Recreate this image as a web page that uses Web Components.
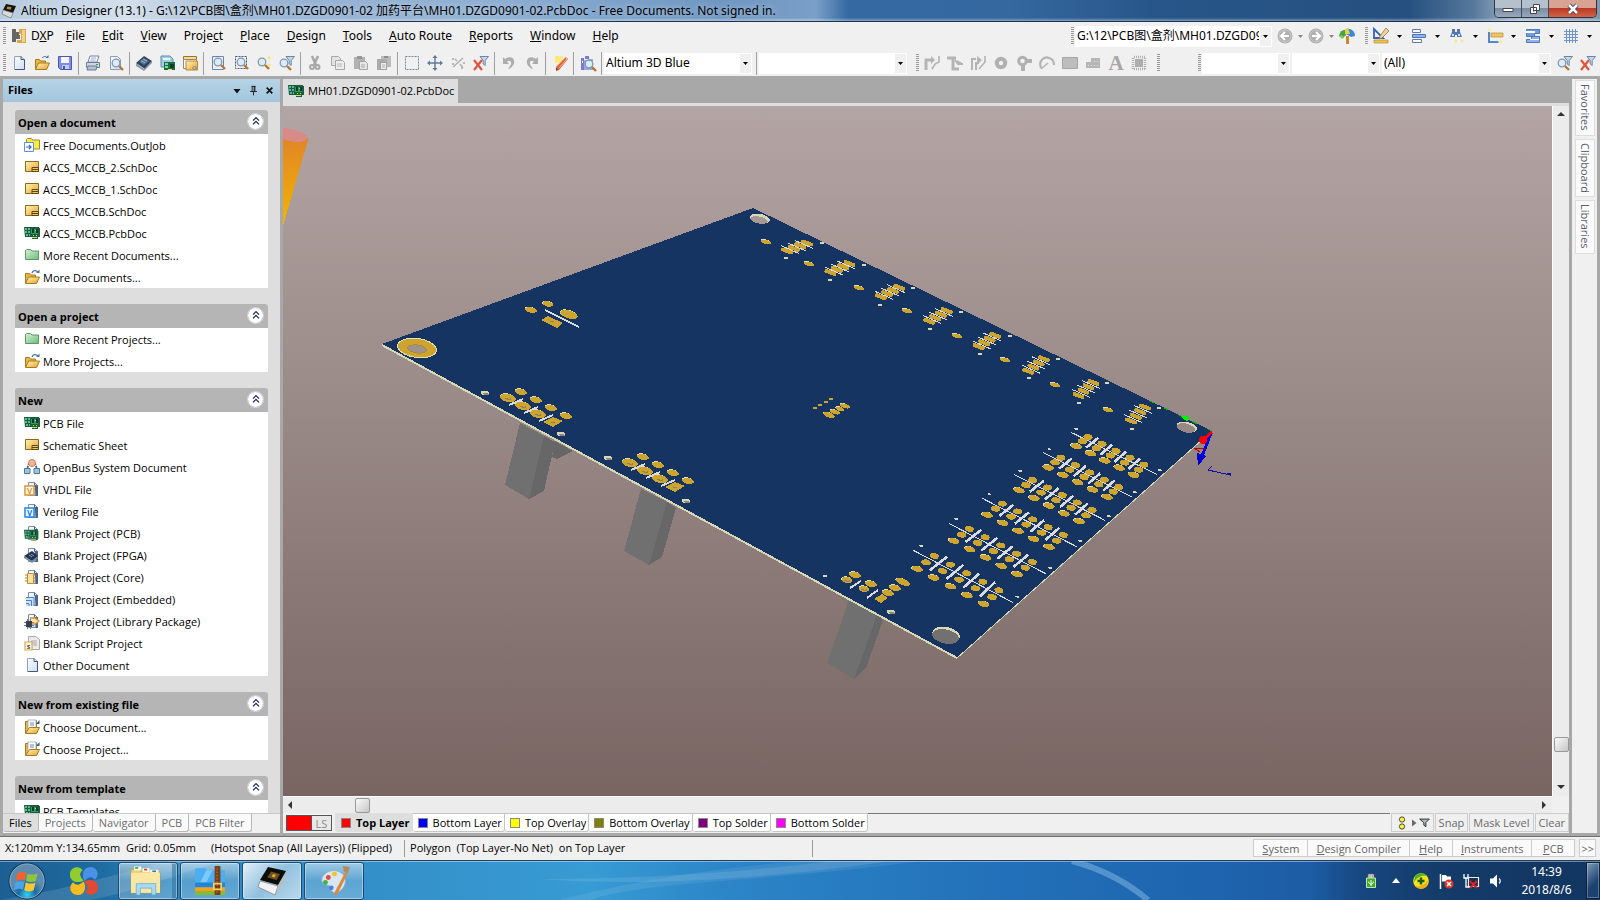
<!DOCTYPE html>
<html lang="en">
<head>
<meta charset="utf-8">
<title>Altium Designer</title>
<style>
html, body {
  margin: 0;
  height: 100%;
}
body {
  display: flex;
  flex-direction: column;
  overflow: hidden;
  background: #a8a8a8;
  color: #000;
  font: 11px/16px "Open Sans", "Noto Sans CJK SC", sans-serif;
}
main {
  flex: 1;
  min-height: 0;
  display: flex;
  gap: 3px;
  padding: 3px;
}
ad-row {
  font: 12px/16px "Noto Sans", "Noto Sans CJK SC", sans-serif;
}
</style>
</head>
<body>
<ad-titlebar>Altium Designer (13.1) - G:\12\PCB图\盒剂\MH01.DZGD0901-02 加药平台\MH01.DZGD0901-02.PcbDoc - Free Documents. Not signed in.</ad-titlebar>

<ad-row>
  <ad-grip></ad-grip>
  <ad-menu icon="dxp">D<u>X</u>P</ad-menu>
  <ad-menu><u>F</u>ile</ad-menu>
  <ad-menu><u>E</u>dit</ad-menu>
  <ad-menu><u>V</u>iew</ad-menu>
  <ad-menu>Proje<u>c</u>t</ad-menu>
  <ad-menu><u>P</u>lace</ad-menu>
  <ad-menu><u>D</u>esign</ad-menu>
  <ad-menu><u>T</u>ools</ad-menu>
  <ad-menu><u>A</u>uto Route</ad-menu>
  <ad-menu><u>R</u>eports</ad-menu>
  <ad-menu><u>W</u>indow</ad-menu>
  <ad-menu><u>H</u>elp</ad-menu>
  <ad-space></ad-space>
  <ad-grip></ad-grip>
  <ad-address value="G:\12\PCB图\盒剂\MH01.DZGD0901-02 加药平台"></ad-address>
  <ad-tool icon="back" more="off" label="Back"></ad-tool>
  <ad-tool icon="forward" more="off" label="Forward"></ad-tool>
  <ad-tool icon="home" label="Home"></ad-tool>
  <ad-space fixed></ad-space>
  <ad-grip></ad-grip>
  <ad-tool icon="draft" more="on" label="Utilities"></ad-tool>
  <ad-tool icon="align" more="on" label="Align"></ad-tool>
  <ad-tool icon="find" more="on" label="Find"></ad-tool>
  <ad-tool icon="dimension" more="on" label="Dimensions"></ad-tool>
  <ad-tool icon="rooms" more="on" label="Rooms"></ad-tool>
  <ad-tool icon="grid" more="on" label="Grids"></ad-tool>
</ad-row>

<ad-row>
  <ad-grip></ad-grip>
  <ad-tool icon="page" label="New"></ad-tool>
  <ad-tool icon="open" label="Open"></ad-tool>
  <ad-tool icon="save" label="Save"></ad-tool>
  <ad-sep></ad-sep>
  <ad-tool icon="print" label="Print"></ad-tool>
  <ad-tool icon="preview" label="Preview"></ad-tool>
  <ad-sep></ad-sep>
  <ad-tool icon="chip" label="Devices"></ad-tool>
  <ad-tool icon="release" label="Release"></ad-tool>
  <ad-tool icon="stack" label="Workspace"></ad-tool>
  <ad-sep></ad-sep>
  <ad-tool icon="zoomdoc" label="Fit document"></ad-tool>
  <ad-tool icon="zoomarea" label="Zoom area"></ad-tool>
  <ad-tool icon="zoomsel" label="Zoom selected"></ad-tool>
  <ad-tool icon="zoomfilter" label="Zoom filtered"></ad-tool>
  <ad-sep></ad-sep>
  <ad-tool icon="cut" label="Cut"></ad-tool>
  <ad-tool icon="copy" label="Copy"></ad-tool>
  <ad-tool icon="paste" label="Paste"></ad-tool>
  <ad-tool icon="stamp" label="Rubber stamp"></ad-tool>
  <ad-sep></ad-sep>
  <ad-tool icon="select" label="Select area"></ad-tool>
  <ad-tool icon="move" label="Move"></ad-tool>
  <ad-tool icon="deselect" label="Deselect"></ad-tool>
  <ad-tool icon="clearfilter" label="Clear filter"></ad-tool>
  <ad-sep></ad-sep>
  <ad-tool icon="undo" label="Undo"></ad-tool>
  <ad-tool icon="redo" label="Redo"></ad-tool>
  <ad-sep></ad-sep>
  <ad-tool icon="wand" label="Cross probe"></ad-tool>
  <ad-sep></ad-sep>
  <ad-tool icon="browse" label="Browse"></ad-tool>
  <ad-sep></ad-sep>
  <ad-combo label="View configuration" size="148" value="Altium 3D Blue"></ad-combo>
  <ad-sep></ad-sep>
  <ad-combo label="Variant" size="148" value=""></ad-combo>
  <ad-space fixed></ad-space>
  <ad-grip></ad-grip>
  <ad-tool icon="route" label="Route"></ad-tool>
  <ad-tool icon="multiroute" label="Multi route"></ad-tool>
  <ad-tool icon="diffroute" label="Differential route"></ad-tool>
  <ad-tool icon="pad" label="Pad"></ad-tool>
  <ad-tool icon="via" label="Via"></ad-tool>
  <ad-tool icon="arc" label="Arc"></ad-tool>
  <ad-tool icon="fill" label="Fill"></ad-tool>
  <ad-tool icon="polygon" label="Polygon"></ad-tool>
  <ad-tool icon="text" label="String"></ad-tool>
  <ad-tool icon="component" label="Component"></ad-tool>
  <ad-space fixed></ad-space>
  <ad-grip></ad-grip>
  <ad-space></ad-space>
  <ad-grip></ad-grip>
  <ad-combo label="Net" size="88" value=""></ad-combo>
  <ad-combo label="Component" size="88" value=""></ad-combo>
  <ad-combo label="Filter" size="169" value="(All)"></ad-combo>
  <ad-tool icon="zoomfilter" label="Apply filter"></ad-tool>
  <ad-tool icon="clearfilter" label="Clear filter"></ad-tool>
</ad-row>

<main>
  <ad-panel heading="Files">
    <ad-section heading="Open a document">
      <ad-item icon="outjob">Free Documents.OutJob</ad-item>
      <ad-item icon="sch">ACCS_MCCB_2.SchDoc</ad-item>
      <ad-item icon="sch">ACCS_MCCB_1.SchDoc</ad-item>
      <ad-item icon="sch">ACCS_MCCB.SchDoc</ad-item>
      <ad-item icon="pcb">ACCS_MCCB.PcbDoc</ad-item>
      <ad-item icon="recent">More Recent Documents...</ad-item>
      <ad-item icon="folder">More Documents...</ad-item>
    </ad-section>
    <ad-section heading="Open a project">
      <ad-item icon="recent">More Recent Projects...</ad-item>
      <ad-item icon="folder">More Projects...</ad-item>
    </ad-section>
    <ad-section heading="New">
      <ad-item icon="pcb">PCB File</ad-item>
      <ad-item icon="sch">Schematic Sheet</ad-item>
      <ad-item icon="openbus">OpenBus System Document</ad-item>
      <ad-item icon="vhdl">VHDL File</ad-item>
      <ad-item icon="verilog">Verilog File</ad-item>
      <ad-item icon="prjpcb">Blank Project (PCB)</ad-item>
      <ad-item icon="prjfpga">Blank Project (FPGA)</ad-item>
      <ad-item icon="prjcore">Blank Project (Core)</ad-item>
      <ad-item icon="prjemb">Blank Project (Embedded)</ad-item>
      <ad-item icon="prjlib">Blank Project (Library Package)</ad-item>
      <ad-item icon="script">Blank Script Project</ad-item>
      <ad-item icon="page">Other Document</ad-item>
    </ad-section>
    <ad-section heading="New from existing file">
      <ad-item icon="choose">Choose Document...</ad-item>
      <ad-item icon="choose">Choose Project...</ad-item>
    </ad-section>
    <ad-section heading="New from template">
      <ad-item icon="pcb">PCB Templates...</ad-item>
    </ad-section>
    <ad-tab slot="tabs" current>Files</ad-tab>
    <ad-tab slot="tabs">Projects</ad-tab>
    <ad-tab slot="tabs">Navigator</ad-tab>
    <ad-tab slot="tabs">PCB</ad-tab>
    <ad-tab slot="tabs">PCB Filter</ad-tab>
  </ad-panel>

  <ad-document name="MH01.DZGD0901-02.PcbDoc">
    <ad-scene></ad-scene>
    <ad-layer slot="layers" color="#f00" current>Top Layer</ad-layer>
    <ad-layer slot="layers" color="#00f">Bottom Layer</ad-layer>
    <ad-layer slot="layers" color="#ff0">Top Overlay</ad-layer>
    <ad-layer slot="layers" color="#808000">Bottom Overlay</ad-layer>
    <ad-layer slot="layers" color="#800080">Top Solder</ad-layer>
    <ad-layer slot="layers" color="#f0f">Bottom Solder</ad-layer>
  </ad-document>

  <ad-dock>
    <button>Favorites</button>
    <button>Clipboard</button>
    <button>Libraries</button>
  </ad-dock>
</main>

<ad-status></ad-status>
<ad-taskbar></ad-taskbar>

<script>
// all glyphs live on a 16 x 16 grid
const lens = (x, y) => `
  <path d="M${x + 3} ${y + 3}l4 4" stroke="#b5763a" stroke-width="2.4"/>
  <circle cx="${x}" cy="${y}" r="3.8" fill="#dcecf8" stroke="#8497ad" stroke-width="1.3"/>`
const sheet = '<path d="M4.500 1.500h6l3 3v10h-9z" fill="url(#paper)" stroke="#7a8dad"/><path d="M10.500 1.500v3h3v10h-2" fill="#4a6288" stroke="#4a6288"/>'
const board = `
  <path d="M0 2h15v1h1v9h-2v2H8v-2H1z" fill="#1c5c40"/>
  <path d="M1 3h2v2H1zM4 3h2v2H4zM1 6h2v2H1zM4 6h2v2H4zM2 9h2v2H2zM5 9h1v2H5z" fill="#58b98a"/>
  <path d="M7 4h7v5H7z" fill="#2f9a5c"/><path d="M8 4h2v4H8zM12 4h2v4h-2z" fill="#12392c"/><path d="M11 5h1v1h-1zM9 10h1v1H9zM12 10h1v1h-1z" fill="#9dee8e"/>
  <path d="M8 12h5v1H8z" fill="#dbe03c"/>`
const funnel = '<path d="M7 1.500h8.500l-3.300 4v5l-2-1.500v-3.500z" fill="#c4d6ee" stroke="#6c86a8"/>'
const folderOpen = '<path d="M1.500 14V4.500h4l1 1.500h5v2" fill="#e9b44a" stroke="#a87a1c"/><path d="M1.500 14.500l3-6.500h11l-3 6.500z" fill="url(#gold)" stroke="#a87a1c"/>'
const disc = d => `<circle cx="8" cy="8" r="7.500" fill="#b0b0b0"/><circle cx="8" cy="8" r="6" fill="none" stroke="#c8c8c8"/><path d="${d}" stroke="#fff" stroke-width="2" fill="none"/>`

const icons = {
  app: '<path d="M5 1l10 2-3 7-10-3z" fill="#151515"/><path d="M2 7l10 3-2 5-9-4z" fill="#dcdcdc" stroke="#666" stroke-width=".6"/><path d="M6.500 3.500l4 .8-1 2.500-4-1z" fill="#b78d34"/>',
  dxp: '<path d="M1 1h4v3h3v3h1v4H5v3H1z" fill="#666"/><path d="M8 1h7v14H6v-3h4V6H8z" fill="#d9a945"/><path d="M11 2h3v12h-3z" fill="#f0d28c"/>',
  page: '<path d="M3.500 1.500h6.500l3.500 3v10h-10z" fill="url(#paper)" stroke="#8fa2c0"/><path d="M10 1.500v3h3.500v10H4" fill="none" stroke="#41587c"/>',
  open: folderOpen + '<path d="M8 3c2-2 4-2 5 0" fill="none" stroke="#3d68a8"/><path d="M11.500 3h3v-3z" fill="#3d68a8"/>',
  save: '<path d="M1.500 1.500h13v13h-11l-2-2z" fill="#7f8ee0" stroke="#4c58b0"/><path d="M4 2h8v6H4z" fill="#f2f5ff"/><path d="M5 10h7v4H5z" fill="#c3cbef"/><path d="M6 11h2v3H6z" fill="#4c58b0"/>',
  print: '<path d="M5 1h9l-2 6H3z" fill="#fff" stroke="#7486a6"/><path d="M6 3h5M5.500 5h5" stroke="#9aaac4"/><path d="M1.500 7.500h13v5h-13z" fill="#cfd6e2" stroke="#6d7d98"/><path d="M3 11h9l-1 4H2z" fill="#b6c1d3" stroke="#6d7d98"/><path d="M11 9h2v1h-2z" fill="#3a3"/>',
  preview: '<path d="M2.500 1.500h7l3 3v10h-10z" fill="url(#paper)" stroke="#8a9cb8"/>' + lens(8, 8),
  chip: '<path d="M8 1l8 5-7 8-9-6z" fill="#31435c"/><path d="M8 3l5 3-5 4-5-3z" fill="#54708f"/><path d="M7 4l4 2M5 5.500l4 2.500" stroke="#a6bdd2"/><path d="M0 8v3l8 5 8-8V6l-8 8z" fill="#8a99ac"/>',
  release: '<path d="M2 1h9l3 3v8H2z" fill="#a9cbe2" stroke="#5c8cae"/><path d="M4 3h7v2H4z" fill="#e6f4fb"/><path d="M5 7h11v8H5z" fill="#1d6b47"/><path d="M6 8h3v2H6zM6 11h3v2H6z" fill="#6fe0a5"/><path d="M11 9h4v4h-4z" fill="#0d3c2c"/><path d="M9 14h4v1H9z" fill="#dbe03c"/>',
  stack: '<path d="M1.500 1.500h13v3h-13z" fill="#f7d98b" stroke="#9a7428"/><path d="M1.500 4.500h13v9h-13z" fill="#fff" stroke="#8b8b8b"/><path d="M4 6h11.500v9H4z" fill="url(#gold)" stroke="#b8892f"/><path d="M11 12h3v2h-3z" fill="#fff" stroke="#7d7d7d"/>',
  zoomdoc: '<path d="M2.500 1.500h11v13h-11z" fill="#e9f0fa" stroke="#6f87ae"/>' + lens(8, 7),
  zoomarea: '<path d="M2.500 1.500h11v12h-11z" fill="none" stroke="#47597a" stroke-dasharray="2 1"/>' + lens(8, 7),
  zoomsel: lens(6, 7) + '<path d="M13 1l2 2-2 2-2-2zM13 8l2 2-2 2-2-2z" fill="#f4ea78"/>',
  zoomfilter: funnel + lens(5, 8),
  cut: '<path d="M5 1l4 9M11 1l-4 9" stroke="#a8a8a8" stroke-width="2.600"/><circle cx="5" cy="12" r="2" fill="none" stroke="#a8a8a8" stroke-width="2"/><circle cx="10.500" cy="12" r="2" fill="none" stroke="#a8a8a8" stroke-width="2"/>',
  copy: '<path d="M1.500 1.500h7l2 2v7h-9z" fill="#e4e4e4" stroke="#a8a8a8"/><path d="M5.500 5.500h7l2 2v7h-9z" fill="#ededed" stroke="#a8a8a8"/><path d="M7 9h5M7 11h5" stroke="#b5b5b5"/>',
  paste: '<path d="M1 2h11v12H1z" fill="#b2b2b2"/><path d="M4 1h5v3H4z" fill="#979797"/><path d="M6.500 6.500h6l2 2v6h-8z" fill="#e6e6e6" stroke="#a5a5a5"/><path d="M8 10h4M8 12h4" stroke="#a9a9a9"/>',
  stamp: '<path d="M5 1h10v11H5z" fill="#bcbcbc"/><path d="M1 4h10v11H1z" fill="#aaa"/><path d="M8 1h4v2H8z" fill="#8f8f8f"/><path d="M4.500 7.500h6v7h-6z" fill="#eee" stroke="#a0a0a0"/><path d="M6 10h3M6 12h3" stroke="#aaa"/>',
  select: '<path d="M1.500 1.500h13v13h-13z" fill="none" stroke="#7b8798" stroke-dasharray="2 1"/>',
  move: '<path d="M8 2v12M2 8h12" stroke="#62789a" stroke-width="1.400"/><path d="M8 0l2.500 3h-5zM8 16l2.500-3h-5zM0 8l3-2.500v5zM16 8l-3-2.500v5z" fill="#62789a"/>',
  deselect: '<path d="M3 12L13 3M5 4l2 2M10 9l3 4" stroke="#b0b0b0" stroke-width="1.500"/><path d="M2 3h2v2H2zM2 8h2v2H2zM11 12h2v2h-2zM13 7h2v2h-2z" fill="#bbb"/>',
  clearfilter: funnel + '<path d="M1 5l8 10M9 5L1 15" stroke="#e0543c" stroke-width="2.200"/>',
  undo: '<path d="M2 2v7h6L6 6.500c3-2 4.500 0 4 2.500-.5 2-2 3-3 5.500 4-2 7-5 6-9-1-4-5-4-9-1.500z" fill="#adadad"/>',
  redo: '<path d="M14 2v7H8l2-2.500C7 4.500 5.500 6.500 6 9c.5 2 2 3 3 5.500-4-2-7-5-6-9 1-4 5-4 9-1.500z" fill="#adadad"/>',
  wand: '<path d="M3 1h8v2H9v2h2v3H3z" fill="#fbe978"/><path d="M14 2l2 2-9 11-3 1v-4z" fill="#e2603c"/><path d="M14 3l1 1-8 9" fill="none" stroke="#f7b49a"/><path d="M4 16v-3l2 1z" fill="#553"/>',
  browse: '<path d="M1 3h3v12H1z" fill="#7a7cd0"/><path d="M4 5h4v10H4z" fill="#9aa8e6"/><path d="M5 1h4v3H5z" fill="#7a7cd0"/><path d="M8 4h5v11H8z" fill="#8fb0dc"/><path d="M2 6h1v2H2zM5 8h2v3H5z" fill="#fff"/>' + lens(9, 9),
  back: disc('M12 8H5M8 4L4 8l4 4'),
  forward: disc('M4 8h7M8 4l4 4-4 4'),
  home: '<path d="M7 8h3v8H7z" fill="#c78a2e"/><path d="M0 8c1-5 4-7 8-6l-1 5-3 3z" fill="#49a33c"/><path d="M7 1c5-1 9 2 9 7l-4 1-5-3z" fill="#3f86d8"/><path d="M6 1l3-1 2 6H6z" fill="#e8d24a"/><path d="M0 8l3-1 2 2-2 2z" fill="#7dcb57"/>',
  draft: '<path d="M1 1v9h9z" fill="none" stroke="#2f64c0" stroke-width="1.800"/><path d="M1 12h14v3H1z" fill="#f2c24e" stroke="#a97c22" stroke-width=".6"/><path d="M13 0l3 3-7 7-3 1 1-3z" fill="#f0cf9a" stroke="#8d6a36" stroke-width=".7"/>',
  align: '<path d="M1.500 1.500h8v3h-8z" fill="#fff" stroke="#5f7cb0"/><path d="M1.500 6.500h13v3h-13z" fill="#8fb5ef" stroke="#4f73b4"/><path d="M1.500 11.500h9v3h-9z" fill="#fff" stroke="#5f7cb0"/>',
  find: '<path d="M3 1h3v3h2V1h3v3l2 5H8V7H6v2H1l2-5z" fill="#5377b6"/><path d="M3 6h2v2H3zM9 6h2v2H9z" fill="#cfe0f7"/><path d="M7 11l1.500 2L7 15l-2-2zM13 11l2 2-2 2-1.500-2z" fill="#f2ea8c"/>',
  dimension: '<path d="M2 4v10h10" fill="none" stroke="#5585cf" stroke-width="2"/><path d="M4 5h12v4H4z" fill="#f1c659" stroke="#a77f2c" stroke-width=".6"/><path d="M2 0l2 2-2 2-2-2zM13 11l2.500 3-2.500 2-2-2z" fill="#f7ef9b"/>',
  rooms: '<path d="M1.500 1.500h13v4h-5v3h-8z" fill="#6f9be0" stroke="#4f78bc"/><path d="M1 3h9v2H1z" fill="#fff"/><path d="M1.500 11.500h5v-3h8v6h-13z" fill="#8fb3ea" stroke="#4f78bc"/><path d="M5 11h9v1H5z" fill="#fff"/>',
  grid: '<path d="M3.500 1v14M6.500 1v14M9.500 1v14M12.500 1v14M1 3.500h14M1 6.500h14M1 9.500h14M1 12.500h14" stroke="#6f93cc"/>',
  route: '<path d="M2 15V5h5" stroke="#b4b4b4" stroke-width="3" fill="none"/><path d="M7 1l4 4-4 4z" fill="#b4b4b4"/><path d="M15 1v6l-4 2-3 5" stroke="#b4b4b4" stroke-width="1.600" fill="none"/>',
  multiroute: '<path d="M0 3h9M6 3v11h6" stroke="#b4b4b4" stroke-width="3" fill="none"/><path d="M8 5l3 4h5M10 6l5 3" stroke="#b4b4b4" stroke-width="2" fill="none"/>',
  diffroute: '<path d="M2 15V4h4M6 15V8h3" stroke="#b4b4b4" stroke-width="2" fill="none"/><path d="M7 1l5 4-5 5z" fill="#b4b4b4"/><path d="M15 1v6l-6 7" stroke="#b4b4b4" stroke-width="1.600" fill="none"/>',
  pad: '<circle cx="8" cy="8" r="4.200" fill="none" stroke="#b0b0b0" stroke-width="4"/>',
  via: '<circle cx="6.500" cy="6" r="3.800" fill="none" stroke="#b0b0b0" stroke-width="3"/><path d="M5 10h4v6H5zM11 4h5v4h-5z" fill="#b0b0b0"/>',
  arc: '<path d="M2 13C-1 5 6 1 10 3c4 1 5 4 5 7" fill="none" stroke="#b4b4b4" stroke-width="2.200"/><path d="M2 14l7-6" stroke="#b4b4b4" stroke-width="1.600"/>',
  fill: '<path d="M.500 2.500h15v11H.500z" fill="#bdbdbd" stroke="#a6a6a6"/>',
  polygon: '<path d="M1 7h5V3h9v10H1z" fill="#b6b6b6"/><path d="M3 10h1v1H3zM6 10h1v1H6zM9 10h1v1H9zM12 10h1v1h-1zM9 6h1v1H9zM12 6h1v1h-1z" fill="#e2e2e2"/>',
  text: '<text x="8" y="15" text-anchor="middle" font-family="Liberation Serif" font-weight="bold" font-size="21" fill="#a6a6a6">A</text>',
  component: '<path d="M4 4h8v8H4z" fill="#aeaeae"/><path d="M3 2h11M3 14h11M2 3v11M14 3v11" stroke="#b0b0b0" stroke-width="2.500" stroke-dasharray="1 1"/>',
  outjob: '<path d="M2.500 12V2.500l1-1h4l1 1.500h7v9h-6" fill="#f6ea4e" stroke="#98912a"/><path d="M.500 5.500h9v9h-9z" fill="#fff" stroke="#5b8fe0"/><path d="M2 10h5M5 8l2 2-2 2" fill="none" stroke="#2f66c8" stroke-width="1.200"/>',
  sch: '<path d="M1.500 2.500h13v10h-13z" fill="url(#gold)" stroke="#8b6b1b"/><path d="M8 8.500h6.500v4H8z" fill="#f4c65a" stroke="#5d4610"/><path d="M8 10.500h6" stroke="#5d4610"/>',
  pcb: board,
  recent: '<path d="M1.500 12.500v-9l1-1h4l1.500 1.500h6.500v8.500z" fill="url(#leaf)" stroke="#5d9668"/>',
  folder: folderOpen + '<path d="M8 4c1-3 4-3 6-1" fill="none" stroke="#4d74a8" stroke-width="1.300"/><path d="M12 4h3.500V.500z" fill="#4d74a8"/>',
  openbus: '<path d="M5 4l-2 6M11 4l2 6" stroke="#3f5575" stroke-width="1.800" stroke-dasharray="2 1"/><circle cx="8" cy="4" r="3.500" fill="#f6b795" stroke="#c47f58"/><path d="M.500 9.500h5.500v5H.500zM10 9.500h5.500v5H10z" fill="#9cc4e0" stroke="#4b7899"/>',
  vhdl: sheet + '<path d="M1 5h9v9H1z" fill="#fffbe9" stroke="#d9963a" stroke-width="1.500"/><text x="5.500" y="12.500" text-anchor="middle" font-family="Open Sans" font-weight="bold" font-size="8" fill="#d9963a">V</text>',
  verilog: sheet + '<path d="M1 5h9v9H1z" fill="#f0f8ff" stroke="#1a86ea" stroke-width="1.500"/><text x="5.500" y="12.500" text-anchor="middle" font-family="Open Sans" font-weight="bold" font-size="8" fill="#1a78dc">V</text>',
  prjpcb: sheet + '<g transform="translate(0 3) scale(.9)">' + board + '</g>',
  prjfpga: sheet + '<path d="M8 4l6 5-6 5-8-5z" fill="#24344f"/><path d="M5 8l3 2M7 7l3 2" stroke="#8ca5c4"/><path d="M0 9v2l8 5 6-5V9l-6 5z" fill="#7889a1"/>',
  prjcore: sheet + '<path d="M1 6h11M1 9h11M1 12h11" stroke="#b87a22"/><path d="M3.500 4.500h6v10h-6z" fill="#fbe3a1" stroke="#c78b33"/>',
  prjemb: sheet + '<path d="M2 6h8v9H2z" fill="#cfe0fa"/><path d="M2 6.500h8V15M2 9.500h5.500V15M2 12.500h3V15" fill="none" stroke="#4a7fd6"/>',
  prjlib: sheet + '<path d="M6 5h5l4 3-4 3H6" fill="#ffe5a8" stroke="#e0902c" stroke-width="1.300"/><path d="M2 8h6v6H2z" fill="#3b3f4a"/><path d="M0 9.500h2M0 12.500h2M8 9.500h2M8 12.500h2M3.500 6v2M6.500 6v2M3.500 14v2M6.500 14v2" stroke="#5d78b8"/>',
  script: '<path d="M4.500 1.500h7l4 3v10h-11z" fill="#ececec" stroke="#a9a9a9"/><path d="M7 6h6M7 8h6M9 10h4" stroke="#a9a9a9"/><path d="M1 7h7v8H1z" fill="#fffbe9" stroke="#d9a84a" stroke-width="1.200"/><text x="4.500" y="13.500" text-anchor="middle" font-family="Open Sans" font-weight="bold" font-size="7" fill="#444">s</text>',
  choose: '<path d="M1.500 14V2.500h3v-1h8v8" fill="#e9b44a" stroke="#a87a1c"/><path d="M4 1h8v9H4z" fill="#fff" stroke="#8b9dbb" stroke-width=".7"/><path d="M6 4h4M6 6h4" stroke="#6a86b0"/><path d="M1.500 14.500l4-6h10l-3 6z" fill="url(#gold)" stroke="#a87a1c"/><path d="M12 5l3.500-4v4z" fill="#35598e"/>',
  start: '<circle cx="8" cy="8" r="7.800" fill="#0e3457"/><circle cx="8" cy="8" r="7.200" fill="url(#orb)" stroke="#8fb8d2" stroke-width=".4"/><path d="M3.800 4.900c1.500-1 2.700-.9 3.900-.3l-.6 3.200c-1.300-.6-2.600-.5-3.900.3z" fill="#ef6330"/><path d="M8.200 4.900c1.200.5 2.700.6 4.300-.2l-.8 3.300c-1.500.7-2.800.5-4.100-.1z" fill="#8fc43e"/><path d="M3 8.700c1.500-.8 2.700-.8 4-.3l-.7 3.200c-1.200-.6-2.600-.5-3.900.3z" fill="#4ba4e6"/><path d="M7.500 8.600c1.200.6 2.700.7 4.100.1l-.8 3.200c-1.400.7-2.700.6-4 0z" fill="#fbc832"/>',
  clover: '<path d="M7.800 7.800C5.500 9.200 .500 9 .500 4.500 .500 .500 5.500-.500 7.300 2.300 4.800 4.300 6.300 5.800 7.800 7.800z" fill="#8fce2c"/><path d="M8.200 7.800C6.800 5.500 7 .500 11.500.500c4 0 5 5 2.200 6.800C11.700 4.800 10.200 6.300 8.200 7.800z" fill="#4a92e8"/><path d="M7.800 8.200c1.400 2.300 1.200 7.300-3.300 7.300-4 0-5-5-2.200-6.800C4.300 11.200 5.800 9.700 7.800 8.200z" fill="#f7bc1e"/><path d="M8.200 8.200c2.300-1.400 7.300-1.200 7.300 3.300 0 4-5 5-6.800 2.200C11.200 11.700 9.700 10.200 8.200 8.200z" fill="#e24a36"/>',
  explorer: '<path d="M1 2.500h4l.7 1H15V14H1z" fill="#e9cf74" stroke="#b69a45" stroke-width=".3"/><path d="M2.500 1.200h3.500v2H2.500zM6.500 2h3.500v2H6.500zM10.300 2.800h4v1.500h-4z" fill="#fff8dc"/><path d="M3 1.500h1.500v.8H3z" fill="#2aa84a"/><path d="M7.300 2.300h1.500v.8H7.300z" fill="#d63a2a"/><path d="M11.300 3.100h1.800v.8h-1.800z" fill="#2a7ad6"/><path d="M1 4.300h14V14H1z" fill="#f8e8a4"/><path d="M3.500 9.500h9.500V15h-2v-3.300H5.500V15h-2z" fill="#a9d8f2" stroke="#5aa2cc" stroke-width=".3"/>',
  zip: '<path d="M.500 2h5l1 1H15v6H.500z" fill="#4aaef0"/><path d="M3 9l3-6h3L6 9z" fill="#7cc9fa"/><path d="M.500 9H15v2.300H.500z" fill="#1f86d8"/><path d="M.500 11.300H15v1.800H.500z" fill="#f5a01e"/><path d="M.500 13.100H15V15H.500z" fill="#86bd2e"/><path d="M10 1h2.800v14H10z" fill="#7b3d16"/><path d="M11.200 2v12" stroke="#c9814a" stroke-width=".4" stroke-dasharray=".8 .8"/><path d="M9.600 9.500h3.600v2.800H9.600z" fill="none" stroke="#f6d15c" stroke-width=".8"/>',
  altium: '<path d="M6 1l9 2-4 7L2 7.500z" fill="#0c0c0c"/><path d="M7.500 3.300l4.500 1.200-1.700 3-4.700-1.300z" fill="#6b4f18"/><path d="M8.500 4.500l1.500.4-.8 1.300-1.400-.4z" fill="#d9ab3a"/><path d="M2 8l9 2.500L9.500 15 1 11z" fill="#f2f2f2" stroke="#888" stroke-width=".4"/><path d="M11 10.500L15 4l-.3 3L10 15z" fill="#bdbdbd"/>',
  paint: '<path d="M2 6.500C4 2.500 10 2 12.500 5.500c2.500 4-1.500 9.300-5 8.300-1.700-.8-.5-2.400-1.700-3.100C4.500 10 1 10.500 2 6.500z" fill="#d8e6f2" stroke="#8fa9c0" stroke-width=".4"/><circle cx="5" cy="6.500" r="1.200" fill="#e04b3a"/><circle cx="8" cy="4.800" r="1.200" fill="#f0c52e"/><circle cx="3.600" cy="9" r="1.200" fill="#48b04a"/><circle cx="6.500" cy="11.500" r="1.100" fill="#4b80dd"/><path d="M13.500 3.500l1 .7-5 10.300-1.500.8.200-1.800z" fill="#dc8a3a"/><path d="M12 1l3.500.5-1 3-2-1z" fill="#b58a60"/>',
  usb: '<path d="M5 1h6v4H5z" fill="#eee" stroke="#555" stroke-width=".8"/><path d="M6.500 2.500h1v1h-1zM8.700 2.500h1v1h-1z" fill="#222"/><path d="M3.500 5h9v9.500h-9z" fill="#3fae21" stroke="#e8f7e0" stroke-width=".8"/><path d="M8 7v6M5.800 8.500v1.500l2.200 1.500 2.200-1.500V8.500" fill="none" stroke="#fff"/>',
  shield: '<circle cx="8" cy="8" r="7.800" fill="#f6e216"/><path d="M2 3C5-.500 11-.500 14 3 10 2 5 3 1 9z" fill="#4bb52a"/><path d="M14 13c-3 3.500-9 3.500-12 0 4 1 9 0 13-6z" fill="#f5a91c"/><path d="M8 4.500v7M4.500 8h7" stroke="#1c5c1a" stroke-width="2.400"/>',
  flag: '<path d="M2.500 1v15" stroke="#fff" stroke-width="1.500"/><path d="M4 2h4l1 1.500h4V10H9L8 8.500H4z" fill="#fff"/><circle cx="11" cy="11" r="4.600" fill="#d8362a"/><path d="M9 9l4 4M13 9l-4 4" stroke="#fff" stroke-width="1.500"/>',
  net: '<path d="M5.500 4.500h10v9h-10z" fill="#16324f" stroke="#e8eef4" stroke-width="1.200"/><path d="M1 1v4h4V1M3 5v9h5" fill="none" stroke="#fff" stroke-width="1.300"/><path d="M7 8l7 7M14 8l-7 7" stroke="#e02020" stroke-width="2"/>',
  volume: '<path d="M2 5.500h3L9 1.500v13l-4-4H2z" fill="#fff"/><path d="M11 5.500c1.500 1.500 1.500 3.500 0 5" fill="none" stroke="#dfe9f2" stroke-width="1.300"/>',
  pin: '<path d="M5 2h6M6 2v7M10 2v7M9 2v7M3 9.500h10M8 10v5" stroke="#111" stroke-width="1.300"/>',
  close: '<path d="M3 3l10 10M13 3L3 13" stroke="#111" stroke-width="3"/>',
  down: '<path d="M1 4h14l-7 9z" fill="#111"/>',
  chevrons: '<path d="M4 7.500l4-4 4 4M4 12.500l4-4 4 4" fill="none" stroke="#1c2d5c" stroke-width="1.800"/>',
  play: '<path d="M4 1l9 7-9 7z" fill="#6a6a6a"/>',
  lamps: '<circle cx="8" cy="4" r="3" fill="#fbf23c" stroke="#333"/><circle cx="8" cy="12" r="3" fill="#fbf23c" stroke="#333"/>',
  mask: '<path d="M1 3h14l-5 5v6l-3-2V8z" fill="#aebdc4" stroke="#222" stroke-width="1.300"/>'
}

const makeTemplate = (html, css) => {
  const t = document.createElement('template')
  t.innerHTML = `<style>* { box-sizing: border-box } button, a { font: inherit; color: inherit; text-decoration: none } ${css}</style>${html}`
  return t
}

class Part extends HTMLElement {
  constructor () {
    super()
    this.attachShadow({mode: 'open'})
  }
  attr (name, or = '') {
    return this.getAttribute(name) || or
  }
  connectedCallback () {
    this.shadowRoot.replaceChildren(makeTemplate(this.html(), this.css()).content.cloneNode(true))
  }
  html () { return '<slot></slot>' }
  css () { return '' }
}

customElements.define('ad-icon', class extends Part {
  html () {
    return `<svg viewBox="0 0 16 16" aria-hidden="true"><defs>
      <linearGradient id="gold" x2="1" y2="1"><stop stop-color="#fff6b8"/><stop offset="1" stop-color="#e8a02c"/></linearGradient>
      <linearGradient id="paper" x2="1" y2="1"><stop stop-color="#fff"/><stop offset="1" stop-color="#cfdcf0"/></linearGradient>
      <linearGradient id="leaf" x2="1" y2="1"><stop stop-color="#d6f2d4"/><stop offset="1" stop-color="#6fbb7b"/></linearGradient>
      <radialGradient id="orb" cy=".9"><stop stop-color="#31d4f8"/><stop offset=".5" stop-color="#1a6ba4"/><stop offset="1" stop-color="#5d8cae"/></radialGradient>
    </defs>${icons[this.attr('name')]}</svg>`
  }
  css () {
    const size = this.attr('size', '16')
    return `:host { display: block; flex: none; width: ${size}px; height: ${size}px } svg { display: block; width: 100%; height: 100%; overflow: visible }`
  }
})

customElements.define('ad-titlebar', class extends Part {
  html () {
    return `
    <ad-icon name="app"></ad-icon><h1><slot></slot></h1>
    <div id="win">
      <button aria-label="Minimize"><svg width="12" height="8"><path d="M1 3.500h10v3H1z" fill="#fff" stroke="#445"/></svg></button>
      <button aria-label="Restore"><svg width="12" height="12"><path d="M4.500 1.500h6v6h-6zM1.500 4.500h6v6h-6z" fill="#fff" stroke="#445"/><path d="M4 7h1.500v1.500H4z" fill="#445"/></svg></button>
      <button aria-label="Close" id="x"><svg width="14" height="12"><path d="M3 2l8 8M11 2l-8 8" stroke="#445" stroke-width="4.500"/><path d="M3 2l8 8M11 2l-8 8" stroke="#fff" stroke-width="2.500"/></svg></button>
    </div>`
  }
  css () {
    return `
    :host {
      display: flex; align-items: center; flex: none; height: 22px; padding: 0 3px 0 1px; gap: 4px;
      border-bottom: 1px solid #1e3250; box-sizing: border-box;
      background: linear-gradient(#fff0 85%, #ffffff66), linear-gradient(90deg, #b5cade 0, #d3dfec 8%, #9ab4d3 15%, #8fb0d3 30%, #6f97c2 45%, #7a9fc8 51%, #3569a2 53%, #34689f 63%, #28568a 72%, #25507f 88%, #55779c 92%, #a9b8c6 95%, #8295aa 100%);
    }
    h1 { flex: 1; margin: 0; font: 12px/20px "Noto Sans", "Noto Sans CJK SC", sans-serif; white-space: nowrap; overflow: hidden; text-shadow: 0 0 6px #fff9 }
    #win { display: flex; align-self: flex-start; height: 18px; border: 1px solid #28364a; border-top: 0; border-radius: 0 0 5px 5px; overflow: hidden }
    button { display: grid; place-items: center; width: 27px; padding: 0; border: 0; border-right: 1px solid #3b4c63; background: linear-gradient(#b4c0cc 50%, #7b8da2 50%, #98a9ba) }
    #x { width: 47px; border: 0; background: linear-gradient(#d9a394 45%, #bc3a22 50%, #d0634a) }`
  }
})

customElements.define('ad-row', class extends Part {
  css () {
    return `:host { display: flex; flex: none; align-items: center; height: 28px; padding: 0 3px; background: #f0f0f0; box-sizing: border-box; white-space: nowrap }
    :host(:nth-of-type(2)) { height: 26px; padding-right: 1px }`
  }
})

customElements.define('ad-space', class extends Part {
  css () { return ':host { flex: 1 } :host([fixed]) { flex: none; width: 7px }' }
})

customElements.define('ad-grip', class extends Part {
  css () { return ':host { flex: none; width: 3px; height: 18px; margin-right: 1px; background: repeating-linear-gradient(#9a9a9a 0 1px, #f0f0f0 1px 2px) }' }
})

customElements.define('ad-sep', class extends Part {
  css () { return ':host { flex: none; width: 1px; height: 23px; margin: 0 2px; background: #a0a0a0 }' }
})

customElements.define('ad-menu', class extends Part {
  html () {
    const icon = this.attr('icon')
    return `<button>${icon ? `<ad-icon name="${icon}"></ad-icon>` : ''}<span><slot></slot></span></button>`
  }
  css () {
    return `:host { flex: none } button { display: flex; align-items: center; gap: 4px; padding: 0 9px 0 8px; border: 0; background: none }
    :host([icon]) button { padding: 0 4px }`
  }
})

customElements.define('ad-tool', class extends Part {
  html () {
    const more = this.attr('more')
    return `<button aria-label="${this.attr('label')}"><ad-icon name="${this.attr('icon')}"></ad-icon></button>` +
      (more ? `<button class="more" aria-label="${this.attr('label')} options"><svg width="5" height="3"><path d="M0 0h5L2.500 3z" fill="${more === 'on' ? '#000' : '#888'}"/></svg></button>` : '')
  }
  css () {
    return `:host { display: flex; flex: none }
    button { display: grid; place-items: center; width: 23px; height: 22px; padding: 0; border: 0; background: none }
    .more { width: 15px }
    :host([more=off]) .more { width: 8px }`
  }
})

const arrow = '<svg width="5" height="3"><path d="M0 0h5L2.500 3z"/></svg>'

customElements.define('ad-combo', class extends Part {
  html () {
    return `<label><select aria-label="${this.attr('label')}"><option>${this.attr('value')}</option></select><span>${arrow}</span></label>`
  }
  css () {
    return `:host { display: block; flex: 0 1 ${this.attr('size')}px; margin-right: 2px }
    label { display: flex; height: 21px; padding: 1px; background: #fff }
    select { flex: 1; min-width: 0; appearance: none; border: 0; padding: 0 1px; background: none; color: inherit; font: inherit; outline: 0 }
    span { display: grid; place-items: center; width: 11px; background: #f0f0f0 }`
  }
})

customElements.define('ad-address', class extends Part {
  html () {
    return `<input aria-label="Address" value="${this.attr('value')}"><button aria-label="History">${arrow}</button>`
  }
  css () {
    return `:host { display: flex; flex: none; width: 197px; height: 21px; margin-right: 1px; padding: 1px; background: #fff; box-sizing: border-box }
    input { flex: 1; min-width: 0; border: 0; padding: 0 1px; background: none; font: inherit; outline: 0 }
    button { display: grid; place-items: center; width: 11px; padding: 0; border: 0; background: #f0f0f0 }`
  }
})

customElements.define('ad-panel', class extends Part {
  html () {
    return `
    <header><h2>${this.attr('heading')}</h2>
      <button aria-label="Menu"><ad-icon name="down" size="8"></ad-icon></button>
      <button aria-label="Pin"><ad-icon name="pin" size="11"></ad-icon></button>
      <button aria-label="Close"><ad-icon name="close" size="9"></ad-icon></button>
    </header>
    <div id="body"><slot></slot></div>
    <nav><slot name="tabs"></slot></nav>`
  }
  css () {
    return `
    :host { display: flex; flex-direction: column; flex: none; width: 277px; background: #dedede }
    header { display: flex; align-items: center; height: 23px; padding: 0 3px 0 5px; background: linear-gradient(#b5d3e6, #a3c6dd) }
    h2 { flex: 1; margin: 0; font-size: 11px; line-height: 14px; padding-bottom: 2px }
    button { display: grid; place-items: center; width: 16px; height: 16px; padding: 0; border: 0; background: none }
    #body { flex: 1; min-height: 0; overflow: hidden; display: flex; flex-direction: column; gap: 16px; padding: 8px 12px 0 }
    nav { display: flex; height: 20px; padding-bottom: 1px; background: #f0f0f0; border-top: 1px solid #c8c8c8; box-sizing: border-box }`
  }
})

customElements.define('ad-section', class extends Part {
  html () {
    return `<header><h3>${this.attr('heading')}</h3><button aria-label="Collapse"><ad-icon name="chevrons" size="12"></ad-icon></button></header><slot></slot>`
  }
  css () {
    return `
    :host { display: block; flex: none; background: linear-gradient(#dedede 4px, #fff 4px) }
    header { display: flex; align-items: center; height: 24px; padding: 0 5px 2px 3px; background: #b5b5b5; border-radius: 3px 3px 0 0 }
    h3 { flex: 1; margin: 3px 0 0; font-size: 11px }
    button { display: grid; place-items: center; width: 15px; height: 15px; padding: 0; border: 0; border-radius: 50%; background: #fff; outline: 1px solid #d4d4e0 }`
  }
})

customElements.define('ad-item', class extends Part {
  html () { return `<a href="#"><ad-icon name="${this.attr('icon')}"></ad-icon><span><slot></slot></span></a>` }
  css () {
    return `:host { display: block } a { display: flex; align-items: center; gap: 3px; height: 22px; padding-left: 9px }
    span { padding-top: 2px }`
  }
})

customElements.define('ad-tab', class extends Part {
  html () { return '<button><slot></slot></button>' }
  css () {
    return `button { height: 18px; padding: 0 6px; border: 0; border-right: 1px solid #b8b8b8; border-bottom: 1px solid #b8b8b8; border-radius: 0 0 3px 3px; background: #fafafa; color: #6e6e6e; line-height: 16px }
    :host([current]) button { background: #dedede; color: #000 }`
  }
})

customElements.define('ad-scroll', class extends Part {
  html () {
    const v = this.hasAttribute('vertical')
    const a = v ? ['M2 7l4-4 4 4z', 'M2 4h8l-4 4z'] : ['M7 2v8L3 6z', 'M4 2v8l4-4z']
    const cap = d => `<svg width="12" height="12"><path d="${d}" fill="#333"/></svg>`
    return `${cap(a[0])}<i style="flex:${this.attr('before')}"></i><b></b><i style="flex:${this.attr('after')}"></i>${cap(a[1])}`
  }
  css () {
    return `:host { display: flex; align-items: center; flex: none; padding: 0 2px; background: #ececec; height: 17px; border-top: 1px solid #fff; box-sizing: border-box }
    :host([vertical]) { flex-direction: column; width: 17px; height: auto; padding: 3px 0; border: 0; border-left: 1px solid #fff }
    svg { display: block; flex: none }
    b { flex: none; width: 15px; height: 15px; border: 1px solid #999; border-radius: 2px; background: linear-gradient(135deg, #fafafa, #c6c6c8) }`
  }
})

customElements.define('ad-layer', class extends Part {
  html () { return '<button><i></i><slot></slot></button>' }
  css () {
    return `button { display: flex; align-items: center; gap: 5px; height: 19px; padding: 0 2px 0 5px; border: 1px solid #c4c4c4; border-left: 0; border-radius: 0 0 3px 3px; background: #fff; white-space: nowrap }
    i { width: 10px; height: 10px; border: 1px solid #888; background: ${this.attr('color')} }
    :host([current]) button { background: #dedede; font-weight: bold; border-color: #dedede; padding: 0 2px 0 6px }`
  }
})

customElements.define('ad-document', class extends Part {
  html () {
    return `
    <header><button><ad-icon name="pcb"></ad-icon>${this.attr('name')}</button></header>
    <div id="view"><slot></slot><ad-scroll vertical before="616" after="29"></ad-scroll></div>
    <div id="h"><ad-scroll before="58" after="1165"></ad-scroll></div>
    <footer>
      <button id="ls" aria-label="Layer sets"><i></i><span>LS</span></button>
      <slot name="layers"></slot>
      <div id="line"></div>
      <button class="opt" aria-label="Highlight"><ad-icon name="lamps" size="14"></ad-icon><ad-icon name="play" size="8"></ad-icon><ad-icon name="mask" size="11"></ad-icon></button>
      <button class="opt">Snap</button><button class="opt">Mask Level</button><button class="opt">Clear</button>
    </footer>`
  }
  css () {
    return `
    :host { display: flex; flex-direction: column; flex: 1; min-width: 0 }
    header { display: flex; height: 27px; border-bottom: 3px solid #dedede }
    header button { display: flex; align-items: center; gap: 4px; height: 27px; padding: 0 4px 3px 5px; border: 0; background: #dedede }
    #view { flex: 1; min-height: 0; display: flex }
    #h { padding-right: 17px; background: #f0f0f0 }
    footer { display: flex; align-items: flex-start; height: 20px; background: #f0f0f0 }
    #ls { display: flex; flex: none; width: 46px; height: 16px; margin: 2px 3px 0; padding: 0; border: 1px solid #555; color: #888; background: #e8e8e8 }
    #ls i { width: 25px; align-self: stretch; background: #f00; border-right: 1px solid #555 }
    #ls span { flex: 1; line-height: 15px }
    #line { flex: 1; border-top: 1px solid #777 }
    .opt { display: flex; align-items: center; gap: 1px; height: 19px; margin-left: 1px; padding: 0 3px; border: 1px solid #ccc; background: #f0f0f0; color: #6a6a6a; white-space: nowrap }`
  }
})

customElements.define('ad-dock', class extends Part {
  css () {
    return `:host { display: flex; flex-direction: column; flex: none; gap: 3px; width: 25px; padding: 1px 2px 0 3px; background: #f0f0f0; box-sizing: border-box }
    ::slotted(button) { writing-mode: vertical-rl; width: 20px; padding: 3px 0 4px; margin: 0; border: 1px solid #ddd; background: #fafafa; color: #5b5f70; font: 11px/18px "Open Sans", sans-serif }`
  }
})

customElements.define('ad-status', class extends Part {
  html () {
    return `
    <span>X:120mm Y:134.65mm</span><span>Grid: 0.05mm</span><span>(Hotspot Snap (All Layers)) (Flipped)</span>
    <i></i><span id="msg">Polygon&nbsp; (Top Layer-No Net)&nbsp; on Top Layer</span><i></i>
    <nav><button><u>S</u>ystem</button><button><u>D</u>esign Compiler</button><button><u>H</u>elp</button><button><u>I</u>nstruments</button><button><u>P</u>CB</button></nav>
    <button id="more">&gt;&gt;</button>`
  }
  css () {
    return `
    :host { display: flex; align-items: center; flex: none; height: 25px; padding: 0 4px 1px 5px; background: #f0f0f0; border-top: 1px solid #707070; border-bottom: 1px solid #23415f; box-sizing: border-box; white-space: nowrap }
    span { margin-right: 6px }
    span:nth-of-type(2) { margin-right: 15px }
    span:nth-of-type(3) { margin-right: 12px }
    i { width: 1px; height: 17px; background: #999; margin-right: 5px }
    #msg { flex: 0 0 396px }
    nav { display: flex; margin-left: auto; border-left: 1px solid #ccc }
    button { min-width: 43px; height: 18px; padding: 0 8px; border: 1px solid #ccc; border-left: 0; background: #fafafa; color: #666; line-height: 15px }
    #more { min-width: 0; border-left: 1px solid #ccc; margin-left: 4px; padding: 0 1px }`
  }
})

customElements.define('ad-taskbar', class extends Part {
  html () {
    return `
    <svg id="glow" viewBox="0 0 1600 39" preserveAspectRatio="none" aria-hidden="true">
      <path d="M0 39C60 30 120 12 170 0h50C160 20 120 34 90 39z" fill="#fff" opacity=".12"/>
      <path d="M560 39c70-18 140-30 240-39h120C780 20 640 20 590 39z" fill="#fff" opacity=".08"/>
      <path d="M540 18c80 6 200 4 350-18h-60C740 12 640 18 540 18z" fill="#fff" opacity=".1"/>
      <path d="M1072 0c30 8 56 22 76 39" stroke="#9fd0f5" stroke-width="6" opacity=".4" fill="none"/>
    </svg>
    <button class="plain" aria-label="Start"><ad-icon name="start" size="38"></ad-icon></button>
    <button class="plain" aria-label="Browser"><ad-icon name="clover" size="30"></ad-icon></button>
    <button class="task multi" aria-label="Explorer"><ad-icon name="explorer" size="33"></ad-icon></button>
    <button class="task" aria-label="Archive"><ad-icon name="zip" size="33"></ad-icon></button>
    <button class="task on" aria-label="Altium Designer"><ad-icon name="altium" size="32"></ad-icon></button>
    <button class="task" aria-label="Paint"><ad-icon name="paint" size="33"></ad-icon></button>
    <div id="tray">
      <ad-icon name="usb"></ad-icon>
      <svg width="8" height="5"><path d="M0 5h8L4 0z" fill="#fff"/></svg>
      <ad-icon name="shield"></ad-icon><ad-icon name="flag"></ad-icon><ad-icon name="net"></ad-icon><ad-icon name="volume"></ad-icon>
    </div>
    <time datetime="2018-08-06T14:39"><span>14:39</span><span>2018/8/6</span></time>
    <button id="desk" aria-label="Show desktop"></button>`
  }
  css () {
    return `
    :host {
      position: relative; display: flex; align-items: center; flex: none; height: 39px; padding-left: 6px; color: #fff; box-shadow: inset 0 1px #ffffff66;
      background: linear-gradient(90deg, #1c5f93 0, #1d6a9f 6%, #2b86bf 11%, #3591ca 25%, #379bd4 37%, #2c86c8 45%, #2271b9 62%, #1e64ae 76%, #1c5ca4 82%, #174780 85%, #143b69 90%, #123561 100%);
    }
    #glow { position: absolute; inset: 0; width: 100%; height: 100% }
    button { position: relative; display: grid; place-items: center; padding: 0; border: 0; background: none }
    .plain { width: 42px }
    .plain + .plain { width: 64px; margin-right: 6px; padding-left: 8px }
    .task { width: 60px; height: 38px; margin-right: 2px; border: 1px solid #1b4a70; border-radius: 3px; background: linear-gradient(#ffffff88, #ffffff33 50%, #ffffff44); box-shadow: inset 0 0 0 1px #ffffff66 }
    .multi { padding-right: 6px; box-shadow: inset 0 0 0 1px #ffffff66, inset -5px 0 #2f6e9a88 }
    .on { background: linear-gradient(135deg, #ffffffdd, #ffffff77 50%, #ffffffaa) }
    #tray { position: relative; display: flex; align-items: center; gap: 9px; margin-left: auto }
    #tray svg { margin: 0 4px }
    time { position: relative; display: flex; flex-direction: column; width: 82px; padding-left: 3px; text-align: center; font: 12px/18px "Noto Sans", sans-serif }
    #desk { width: 14px; height: 37px; border: 1px solid #0c2340; background: linear-gradient(135deg, #7f9bb9, #1d4270 60%); box-shadow: inset 0 0 0 1px #ffffff44 }`
  }
})

// board coordinates, window space of the 3D view
const gold = '#cda52e'
const cream = '#d9d8b6'
const ell = (x, y, rx, ry, rot = 10, fill = gold, edge = '') =>
  `<ellipse cx="${x}" cy="${y}" rx="${rx}" ry="${ry}" transform="rotate(${rot} ${x} ${y})" fill="${fill}" ${edge}/>`
const pad = (x, y, rx, ry, rot) => ell(x - 0.5, y - 0.5, rx, ry, rot, '#e6dfae') + ell(x, y, rx, ry, rot)
const drilled = (x, y, rx, ry) => pad(x, y, rx, ry) + `<path d="M${x - 3} ${y}h2v1h3v-1" stroke="#8d8266" fill="none"/>`
const diamond = (x, y) => `<path d="M${x - 10} ${y}l10-5 10 4-10 6z" fill="${gold}"/><path d="M${x - 2} ${y}h4" stroke="#8d8266"/>`
const bar = (x1, y1, x2, y2, w = 2) => `<path d="M${x1} ${y1}L${x2} ${y2}" stroke="#dadbe0" stroke-width="${w}"/>`
const dot = (x, y) => ell(x, y, 2, 1, 10, cream)
const hole = (x, y) => ell(x, y, 4.5, 2.2, 10, cream) + ell(x + 1, y + 1, 3, 1.2, 10, '#94827f')
const mix = (a, b, t) => a + (b - a) * t

const terminal = (x, y) => {
  let s = ''
  for (let i = 0; i < 4; i++) s += pad(x + 13 + i * 15, y - 6 + i * 8, 6, 3)
  for (let i = 0; i < 3; i++) s += drilled(x + i * 15, y + i * 8, 8, 4)
  for (let i = 0; i < 3; i++) s += bar(x + 1 + i * 15, y + 7 + i * 8, x + 15 + i * 15, y + 1 + i * 8)
  return s + diamond(x + 45, y + 24)
}

// [centre x, y, lone pad x, y, lower dot x, y, edge dot x, y]
const sensors = [
  [797, 247, 766, 242, 786, 258, 822, 243], [840, 268, 809, 264, 830, 280, 864, 265],
  [890, 292, 859, 288, 880, 305, 913, 288], [938, 316, 907, 311, 930, 329, 961, 312],
  [987, 341, 957, 336, 980, 354, 1010, 336], [1036, 365, 1005, 360, 1029, 378, 1058, 359],
  [1086, 389, 1055, 385, 1079, 403, 1107, 383], [1138, 414, 1108, 410, 1132, 429, 1159, 408]
]
const sensor = ([x, y, px, py, lx, ly, ex, ey], n) => {
  let s = pad(px, py, 5, 2, 15) + dot(lx, ly) + dot(ex, ey)
  const w = mix(10, 7, n / 7)
  const h = mix(4, 7, n / 7)
  for (let i = -1; i <= 1; i++) {
    const cx = x + w * i * 0.67
    const cy = y - h * i * 0.67
    s += bar(cx - 9, cy - 4, cx + 9, cy + 4, 1)
  }
  for (let i = 0; i < 4; i++) {
    const cx = mix(x - w, x + w, i / 3)
    const cy = mix(y + h, y - h, i / 3)
    s += `<path d="M${cx - 4} ${cy - 1.5}l8 3" stroke="${gold}" stroke-width="4" stroke-linecap="round"/>`
  }
  return s
}

// [line, upper pads first/last, middle pads, lower pads, dots], tripled pixels
const rows = [
  [543, 97, 800, 223, 594, 111, 762, 194, 577, 124, 746, 209, 559, 139, 731, 225, 559, 87, 810, 211],
  [459, 157, 725, 290, 513, 173, 686, 261, 495, 187, 670, 275, 475, 203, 652, 291, 478, 148, 735, 277],
  [372, 223, 645, 361, 428, 240, 606, 330, 408, 255, 588, 346, 387, 271, 568, 364, 391, 213, 656, 348],
  [277, 295, 560, 440, 337, 311, 520, 405, 317, 326, 500, 422, 292, 345, 478, 441, 298, 283, 571, 423],
  [178, 371, 467, 521, 238, 387, 427, 486, 215, 404, 406, 503, 192, 423, 382, 523, 199, 357, 481, 504],
  [70, 451, 368, 607, 133, 468, 327, 571, 108, 487, 306, 591, 82, 507, 281, 612, 94, 438, 382, 590]
]
const header = raw => {
  const p = raw.map((v, i) => v / 3 + (i % 2 ? 400 : 890))
  let s = bar(p[0], p[1], p[2], p[3], 1) + dot(p[16], p[17]) + dot(p[18], p[19])
  const at = (k, t) => [mix(p[k], p[k + 2], t), mix(p[k + 1], p[k + 3], t)]
  for (let i = 0; i < 5; i++) {
    const u = at(4, i / 4)
    const m = at(8, i / 4)
    const l = at(12, i / 4)
    s += ell(...u, 4.6, 2.9) + ell(...m, 4.8, 2.9) + pad(...l, 5.7, 2.8, 12)
    if (i < 4) {
      const q = at(8, (i + 1) / 4)
      const cx = (u[0] + q[0]) / 2
      const cy = (u[1] + q[1]) / 2
      const dx = (u[0] - m[0]) * 1.05
      const dy = (u[1] - m[1]) * 1.1
      s += bar(cx - dx, cy - dy, cx + dx, cy + dy, 2.6)
    }
  }
  return s
}

customElements.define('ad-scene', class extends Part {
  html () {
    return `<svg viewBox="283 106 1269 690" preserveAspectRatio="xMidYMid slice" shape-rendering="crispEdges" role="img" aria-label="3D board view">
    <defs><linearGradient id="cone" x2="0" y2="1"><stop stop-color="#e0802a"/><stop offset="1" stop-color="#f2b600"/></linearGradient></defs>
    <path d="M283 129c12-1 25 5 25 11l-25 86z" fill="url(#cone)"/><ellipse cx="290" cy="135" rx="17" ry="6" fill="#d98a86" transform="rotate(12 290 135)"/>
    <path d="M555 441l18 10-16 8-5-2z" fill="#666"/>
    <path d="M520 423l24 13-15 63-24-14zM641 489l26 13-18 63-25-14zM849 600l28 15-23 64-27-16z" fill="#707070"/>
    <path d="M544 436l11 6-11 49-15 8zM667 502l9 6-14 49-13 8zM877 615l6 5-17 48-12 11z" fill="#676767"/>
    <path d="M382 344l371-136 459 223-255 227z" fill="#163462"/>
    <path d="M382 345l575 313" stroke="${cream}" stroke-width="2"/><path d="M957 658l255-227" stroke="${cream}"/>
    ${ell(417, 348, 20, 10, 8, '#e6dfae')}${ell(417, 348, 19, 9, 8)}${ell(417, 349, 9.5, 4, 8, '#9f9190', 'stroke="#a98a3a"')}
    ${ell(760, 218.5, 10, 4.5, 12, cream)}${ell(759, 220, 9, 3.4, 12, '#a59895')}
    ${ell(1187, 427, 10.5, 5, 14, cream)}${ell(1186, 428, 9.5, 4.4, 14, '#988986')}
    ${ell(946, 635, 14, 8, 12, cream)}${ell(945.5, 636.5, 13.5, 7, 12, '#727070')}
    ${pad(531, 310, 6, 2.6)}${pad(548, 304, 5.5, 2.6)}${pad(569, 314.5, 9, 4, 16)}
    <path d="M541 320l7-4 15 7-6 5z" fill="${gold}"/><path d="M550 321h4" stroke="#8d8266"/>${bar(545, 310, 579, 327)}
    ${hole(485, 393)}${hole(561, 434)}${terminal(508, 398)}
    ${hole(608, 458)}${hole(686, 501)}${terminal(630, 463)}
    ${dot(825, 576)}${hole(891, 612)}
    ${pad(855, 575, 6, 3)}${pad(871, 584, 6, 3)}${pad(888, 593, 6, 3)}${pad(903, 582, 7.5, 3, 20)}${pad(895, 588, 6, 3)}
    ${drilled(847, 580, 5.5, 3)}${drilled(864, 589, 5, 3)}<path d="M874 599l8-5 6 4-7 5z" fill="${gold}"/>
    ${bar(850, 588, 861, 581)}${bar(867, 598, 878, 590)}
    ${ell(815, 408, 2.4, 1.3)}${ell(820, 405, 2.4, 1.3)}${ell(826, 402, 2.4, 1.3)}${ell(831, 399, 2.4, 1.3)}
    ${pad(829, 415, 6, 2.4, 18)}${pad(835, 412, 5, 2, 18)}${pad(840, 409, 4.5, 2, 18)}${pad(845, 406, 5, 2, 18)}
    ${sensors.map(sensor).join('')}
    ${rows.map(header).join('')}
    <path d="M1150 401l62 30" stroke="#00c000" stroke-dasharray="4 12"/><path d="M1181 416h8l-2 5z" fill="#00f000" stroke="#00f000"/>
    <path d="M1211 433l-10 26" stroke="#0000e0" stroke-width="3"/><path d="M1197 453l9 3-8 10z" fill="#0000d0"/>
    <path d="M1212 432l-9 8" stroke="#f00" stroke-width="3"/><circle cx="1203" cy="440" r="4" fill="#f00"/>
    <path d="M1205 449l-11-1 6 4" stroke="#b00000" fill="none"/>
    <path d="M1212 466l-4 4 22 5v-2h-3" stroke="#1010a8" fill="none"/>
    </svg>`
  }
  css () {
    return `:host { display: block; flex: 1; min-width: 0; overflow: hidden; background: linear-gradient(#b3a5a4, #786562) }
    svg { display: block; width: 100%; height: 100% }`
  }
})
</script>
</body>
</html>
